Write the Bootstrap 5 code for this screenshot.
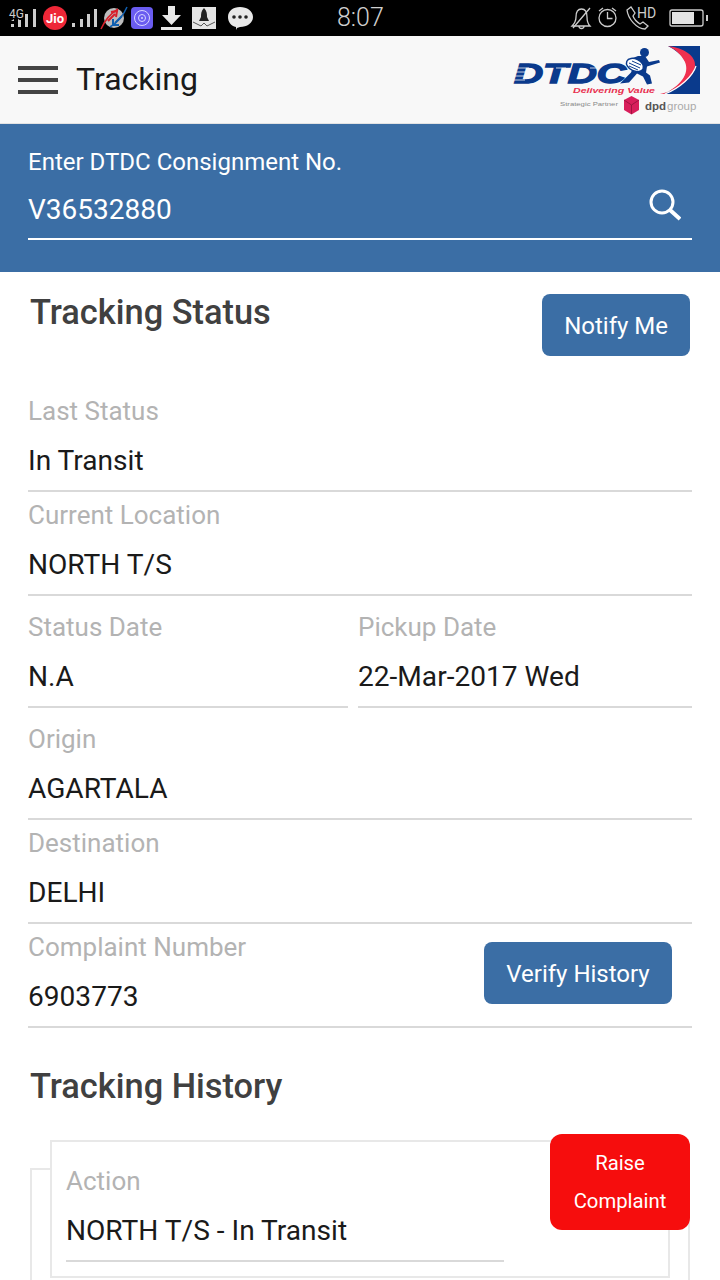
<!DOCTYPE html>
<html lang="en">
<head>
  <meta charset="UTF-8">
  <title>Tracking</title>
  <link href="https://cdn.jsdelivr.net/npm/bootstrap@5.3.2/dist/css/bootstrap.min.css" rel="stylesheet">
  <style>
    html, body { height: 1280px; overflow: hidden; }
    body { font-family: Roboto, "Liberation Sans", sans-serif; background: #fff; color: #1a1a1a; }
    .status-strip { height: 36px; background: #000; color: #d0d0d0; }
    .status-left { width: 337px; }
    .status-time { width: 44px; font-size: 25px; line-height: 38px; font-weight: 300; }
    .app-bar { height: 88px; padding: 0 15px 0 18px; background: #f8f8f8; border-bottom: 1px solid #e3e3e3; }
    .burger { width: 40px; height: 28px; padding: 0; border: 0; background: none; margin-right: 18px; }
    .burger span { display: block; height: 4px; margin-bottom: 8px; background: #444; }
    .app-title { font-size: 32px; line-height: 36px; margin-bottom: 2px; color: #1a1a1a; }
    .search-panel { height: 148px; padding: 20px 28px 0; background: #3b6ea5; color: #fff; }
    .search-label { font-size: 24px; line-height: 37px; }
    .search-row { height: 59px; border-bottom: 2px solid #fff; }
    .search-input { font-size: 28px; line-height: 40px; color: #fff; background: none; border: 0; outline: 0; padding: 0; margin-top: 0; }
    .search-ico { margin: 6px 11px 0 0; }
    .content-wrap { padding: 20px 28px 0; }
    .sect-title { font-size: 34.400px; line-height: 40px; font-weight: 500; color: #404040; margin: 0 0 0 2px; }
    .blue-btn { height: 62px; padding: 2px 22px 0; font-size: 24px; color: #fff; background: #3b6ea5; border: 0; border-radius: 8px; }
    .blue-btn:hover { color: #fff; background: #3b6ea5; }
    .notify-btn { margin: 2px 2px 0 0; }
    .fields { margin-top: 32px; }
    .fld { border-bottom: 2px solid #d9d9d9; padding-bottom: 3px; }
    .fld-label { font-size: 26px; line-height: 46px; color: #b3b3b3; }
    .fld-value { font-size: 28.100px; line-height: 52px; padding-top: 1px; color: #1a1a1a; }
    .fld-half { width: 320px; }
    .date-row { margin: 8px 0; gap: 10px; }
    .verify-btn { margin: 0 20px 2px 0; width: 188px; padding: 2px 0 0; }
    .history-title { margin-top: 38px; }
    .outer-box { margin: 62px 2px 0; min-height: 200px; background: #fff; border: 2px solid #e8e8e8; border-radius: 0; }
    .inner-box { margin: -30px 18px 0; padding: 16px 14px 14px; background: #fff; border: 2px solid #e8e8e8; border-radius: 0; }
    .inner-fld { width: 438px; }
    .raise-btn { top: -36px; right: -2px; width: 140px; height: 96px; padding: 10px 0; font-size: 20.300px; line-height: 38px; color: #fff; background: #f60d0d; border: 0; border-radius: 12px; }
    .raise-btn:hover { color: #fff; background: #f60d0d; }
  </style>
</head>
<body>
  <!-- Phone status bar -->
  <div class="status-strip d-flex align-items-center">
    <div class="status-left">
      <svg class="d-block" width="260" height="36" viewBox="0 0 260 36">
        <text x="9" y="18" font-family="Roboto" font-size="12" fill="#ccc">4G</text>
        <g fill="#ccc">
          <path d="M11 21l3-2v2zM18 19l3 2h-3z"/>
          <rect x="11" y="24" width="3" height="3"/><rect x="18" y="20" width="3" height="7"/>
          <rect x="25" y="14" width="3" height="13"/><rect x="33" y="9" width="3" height="18"/>
          <rect x="72" y="23" width="3" height="4"/><rect x="80" y="19" width="3" height="8"/>
          <rect x="87" y="14" width="3" height="13"/><rect x="94" y="9" width="3" height="18"/>
        </g>
        <circle cx="55" cy="18" r="12" fill="#ee2737"/>
        <text x="55" y="23" text-anchor="middle" font-family="Roboto" font-size="13" font-weight="700" fill="#fff">Jio</text>
        <!-- bsnl -->
        <circle cx="114" cy="18" r="10" fill="#bdbdbd"/>
        <path d="M101 29C104 22 110 14 118 9" fill="none" stroke="#d8202a" stroke-width="1.5"/>
        <path d="M108 21l7-7M111 12l6-1-1 6" fill="none" stroke="#d8202a" stroke-width="2"/>
        <path d="M127 7C124 14 118 22 110 27" fill="none" stroke="#0f5fb0" stroke-width="1.5"/>
        <path d="M122 16l-7 7M113 19v6h6" fill="none" stroke="#0f5fb0" stroke-width="2"/>
        <!-- purple app -->
        <rect x="131" y="7" width="22" height="22" rx="4" fill="#6a5cf0"/>
        <g fill="none" stroke="#d9d5ff" stroke-width="1">
          <circle cx="142" cy="18" r="7.500"/><circle cx="142" cy="18" r="3.500"/>
        </g>
        <circle cx="142" cy="18" r="1" fill="#d9d5ff"/>
        <!-- download -->
        <path d="M168 6h7v9h6l-9.500 10-9.500-10h6z" fill="#e8e8e8"/>
        <rect x="161" y="27" width="21" height="3" fill="#e8e8e8"/>
        <!-- rocket app -->
        <rect x="192" y="7" width="24" height="22" fill="#e4e4e4"/>
        <path d="M204 8c3 3 3 6 3 9l2 4h-10l2-4c0-3 0-6 3-9z" fill="#222"/>
        <path d="M193 22l8 4 3-3 3 3 8-4" fill="none" stroke="#555" stroke-width="1"/>
        <!-- chat -->
        <path d="M240 7c7 0 13 4 13 10s-6 10-13 10l-3 1-1 2v-3c-5-1-8-5-8-10 0-6 5-10 12-10z" fill="#e8e8e8"/>
        <g fill="#222"><circle cx="234" cy="17" r="1.800"/><circle cx="240" cy="17" r="1.800"/><circle cx="246" cy="17" r="1.800"/></g>
      </svg>
    </div>
    <div class="status-time text-center">8:07</div>
    <div class="flex-grow-1">
      <svg class="d-block" width="339" height="36" viewBox="381 0 339 36">
        <g fill="none" stroke="#ccc" stroke-width="1.300">
          <path d="M572 26c2-2 4-4 4-9 0-5 2-8 5.500-8s5.500 3 5.500 8c0 5 1 7 3 9z"/>
          <path d="M579 26c0 2 1 2.500 2.500 2.500s2.500-.5 2.500-2.500M590 8l-17 20"/>
          <circle cx="607.500" cy="18" r="8.500"/>
          <path d="M607.500 12v6.500h5M599 11l4-3M616 11l-4-3"/>
          <path d="M627 10l4-3 4 6-2 3c1 3 4 6 7 8l3-2 5 4-3 3c-8 0-17-10-18-19z"/>
          <rect x="670" y="10" width="33" height="16" rx="2"/>
        </g>
        <text x="637" y="18" font-family="Roboto" font-size="14" fill="#ccc">HD</text>
        <rect x="672" y="12" width="22" height="12" fill="#e4e4e4"/>
        <rect x="706" y="15" width="2" height="6" fill="#ccc"/>
      </svg>
    </div>
  </div>

  <!-- App bar -->
  <nav class="navbar app-bar flex-nowrap justify-content-start">
    <button class="burger" type="button" aria-label="Menu"><span></span><span></span><span></span></button>
    <span class="app-title">Tracking</span>
    <svg class="ms-auto" width="200" height="72" viewBox="505 44 200 72">
      <path d="M668 46H700V94H664C690 82 698 62 668 46Z" fill="#0a3a8c"/>
      <path d="M668 46C684 48 696 56 695 66C694 78 678 90 660 94H664C680 86 690 74 685 62C681 54 675 49 668 46Z" fill="#f0304f"/>
      <path d="M665 94C680 88 693 76 696 66" fill="none" stroke="#fff" stroke-width="1.200"/>
      <text x="514" y="83" font-family="Liberation Sans" font-size="27" font-weight="700" font-style="italic" fill="#0a3a8c" stroke="#0a3a8c" stroke-width="1.300" textLength="112" lengthAdjust="spacingAndGlyphs">DTDC</text>
      <g stroke="#f8f8f8" stroke-width=".8"><path d="M513 68h16M513 72h14M513 76h14M513 80h12M556 68h10M590 68h8"/></g>
      <circle cx="644.500" cy="52.500" r="4.500" fill="#0a3a8c"/>
      <path d="M638 56l7 0 4 6 10-2 1 2.500-13 4-1 6 4 3 2 8-5 1-4-8-6-3-8 9-9 1 11-11 4-10-6-3z" fill="#0a3a8c"/>
      <ellipse cx="635" cy="65" rx="9" ry="6" transform="rotate(25 635 65)" fill="#fff" stroke="#0a3a8c" stroke-width="1.500"/>
      <path d="M629 63l11 5M629 66l9 4M632 61l9 4" stroke="#0a3a8c" stroke-width="1"/>
      <text x="573" y="93" font-family="Liberation Sans" font-size="7.500" font-weight="700" font-style="italic" fill="#e8304f" textLength="82" lengthAdjust="spacingAndGlyphs">Delivering Value</text>
      <text x="560" y="106" font-family="Liberation Sans" font-size="6" fill="#888" textLength="58" lengthAdjust="spacingAndGlyphs">Strategic Partner</text>
      <path d="M631.500 96L639 100V110L631.500 114.500L624 110V100Z" fill="#d81e5b"/>
      <path d="M624 100L631.500 105L639 100M631.500 105V114" fill="none" stroke="#8f1239" stroke-width=".8"/>
      <text x="645" y="110" font-family="Liberation Sans" font-size="11.500" font-weight="700" fill="#555">dpd</text>
      <text x="667" y="110" font-family="Liberation Sans" font-size="11.500" fill="#aaa">group</text>
    </svg>
  </nav>

  <!-- Consignment search -->
  <div class="search-panel">
    <div class="search-label">Enter DTDC Consignment No.</div>
    <div class="search-row d-flex justify-content-between">
      <input class="search-input flex-grow-1" type="text" value="V36532880" aria-label="Consignment number">
      <svg class="search-ico" width="34" height="34" viewBox="0 0 34 34">
        <circle cx="15" cy="15" r="11" fill="none" stroke="#fff" stroke-width="3"/>
        <path d="M23 23l10 9" stroke="#fff" stroke-width="4"/>
      </svg>
    </div>
  </div>

  <div class="content-wrap">
    <div class="d-flex justify-content-between align-items-start">
      <h2 class="sect-title">Tracking Status</h2>
      <button class="btn blue-btn notify-btn" type="button">Notify Me</button>
    </div>

    <div class="fields">
      <div class="fld">
        <div class="fld-label">Last Status</div>
        <div class="fld-value">In Transit</div>
      </div>
      <div class="fld">
        <div class="fld-label">Current Location</div>
        <div class="fld-value">NORTH T/S</div>
      </div>
      <div class="d-flex date-row">
        <div class="fld fld-half">
          <div class="fld-label">Status Date</div>
          <div class="fld-value">N.A</div>
        </div>
        <div class="fld flex-grow-1">
          <div class="fld-label">Pickup Date</div>
          <div class="fld-value">22-Mar-2017 Wed</div>
        </div>
      </div>
      <div class="fld">
        <div class="fld-label">Origin</div>
        <div class="fld-value">AGARTALA</div>
      </div>
      <div class="fld">
        <div class="fld-label">Destination</div>
        <div class="fld-value">DELHI</div>
      </div>
      <div class="fld d-flex justify-content-between align-items-center">
        <div>
          <div class="fld-label">Complaint Number</div>
          <div class="fld-value">6903773</div>
        </div>
        <button class="btn blue-btn verify-btn" type="button">Verify History</button>
      </div>
    </div>

    <h2 class="sect-title history-title">Tracking History</h2>

    <div class="card outer-box position-relative">
      <div class="card inner-box">
        <div class="fld inner-fld">
          <div class="fld-label">Action</div>
          <div class="fld-value">NORTH T/S - In Transit</div>
        </div>
      </div>
      <button class="btn raise-btn position-absolute" type="button">Raise<br>Complaint</button>
    </div>
  </div>

  <script src="https://cdn.jsdelivr.net/npm/bootstrap@5.3.2/dist/js/bootstrap.bundle.min.js"></script>
</body>
</html>
